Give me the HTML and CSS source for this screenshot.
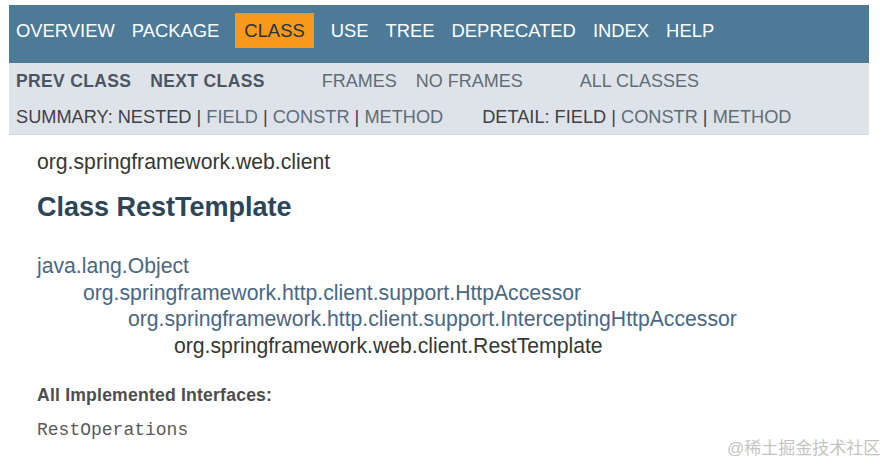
FILE: index.html
```html
<!DOCTYPE html>
<html>
<head>
<meta charset="utf-8">
<link rel="stylesheet" href="styles.css">
</head>
<body>
<div class="page">
  <div class="top-nav">
    <ul class="nav-list">
      <li>OVERVIEW</li>
      <li>PACKAGE</li>
      <li class="active">CLASS</li>
      <li>USE</li>
      <li>TREE</li>
      <li>DEPRECATED</li>
      <li>INDEX</li>
      <li>HELP</li>
    </ul>
  </div>
  <div class="sub-nav">
    <div class="sub-row">
      <ul class="sub-group">
        <li class="strong">PREV CLASS</li>
        <li class="strong">NEXT CLASS</li>
      </ul>
      <ul class="sub-group">
        <li class="link">FRAMES</li>
        <li class="link">NO FRAMES</li>
      </ul>
      <ul class="sub-group">
        <li class="link">ALL CLASSES</li>
      </ul>
    </div>
    <div class="sub-row row2">
      <div class="summary">SUMMARY: NESTED | <span class="link">FIELD</span> | <span class="link">CONSTR</span> | <span class="link">METHOD</span></div>
      <div class="detail">DETAIL: FIELD | <span class="link">CONSTR</span> | <span class="link">METHOD</span></div>
    </div>
  </div>
  <div class="content">
    <div class="pkg">org.springframework.web.client</div>
    <h2 class="title">Class RestTemplate</h2>
    <ul class="inherit">
      <li class="link">java.lang.Object</li>
      <li class="link lvl1">org.springframework.http.client.support.HttpAccessor</li>
      <li class="link lvl2">org.springframework.http.client.support.InterceptingHttpAccessor</li>
      <li class="lvl3">org.springframework.web.client.RestTemplate</li>
    </ul>
    <div class="impl-label">All Implemented Interfaces:</div>
    <div class="impl-code">RestOperations</div>
  </div>
  <div class="watermark">@稀土掘金技术社区</div>
</div>
</body>
</html>
```
FILE: styles.css
```css
* { box-sizing: border-box; }
html, body { margin: 0; padding: 0; background: #fff; }
body { font-family: "Liberation Sans", Arial, sans-serif; }
ul { list-style: none; margin: 0; padding: 0; }
.page { position: relative; width: 890px; height: 466px; padding: 5px 0 0 9px; overflow: hidden; }
.top-nav { width: 860px; height: 58px; background: #4d7a97; padding: 8px 0 0 7px; }
.nav-list { display: flex; gap: 17px; font-size: 18.4px; color: #fff; }
.nav-list li { height: 35px; line-height: 36px; }
.nav-list li.active { background: #f8981d; color: #253441; padding: 0 9px; margin-left: -1px; }
.sub-nav { width: 860px; height: 72px; background: #dee3e9; border-bottom: 1px solid #d0d6dc; padding: 0 0 0 7px; }
.sub-row { display: flex; height: 36px; line-height: 36px; font-size: 18px; }
.sub-group { display: flex; gap: 19px; margin-right: 57px; }
.strong { font-weight: bold; color: #4b5662; font-size: 17.5px; letter-spacing: 0.35px; }
.link { color: #5f6d78; }
.row2 { color: #3e4146; font-size: 18.2px; }
.summary { margin-right: 39px; }
.content { padding: 14px 0 0 28px; color: #353833; font-size: 21.2px; }
.pkg { height: 26px; line-height: 26px; }
.title { margin: 0; font-size: 27px; font-weight: bold; color: #2c4557; line-height: 40px; padding-top: 12px; height: 78px; }
.inherit { line-height: 26.7px; }
.inherit .link { color: #4a6782; }
.lvl1 { padding-left: 46px; }
.lvl2 { padding-left: 91px; }
.lvl3 { padding-left: 137px; color: #353833; }
.impl-label { margin-top: 23px; font-weight: bold; font-size: 17.6px; color: #4d4d4d; line-height: 24px; letter-spacing: 0.2px; }
.impl-code { margin-top: 11px; font-family: "Liberation Mono", "Courier New", monospace; font-size: 18px; color: #5a5a5a; line-height: 24px; }
.watermark { position: absolute; left: 727px; top: 438px; font-family: "Liberation Sans", "Noto Sans CJK SC", sans-serif; font-size: 17px; color: #c4c4c4; line-height: 22px; }
```
